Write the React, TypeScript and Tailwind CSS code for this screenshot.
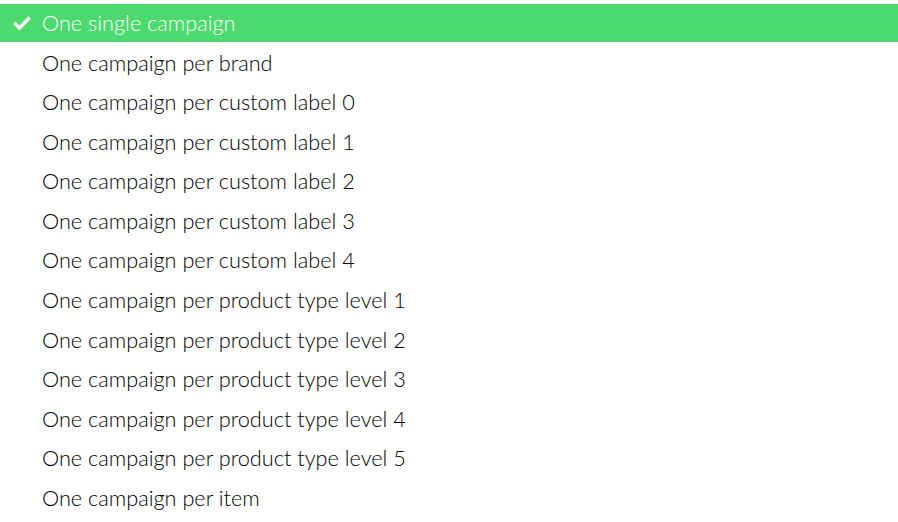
const options = [
  "One single campaign",
  "One campaign per brand",
  "One campaign per custom label 0",
  "One campaign per custom label 1",
  "One campaign per custom label 2",
  "One campaign per custom label 3",
  "One campaign per custom label 4",
  "One campaign per product type level 1",
  "One campaign per product type level 2",
  "One campaign per product type level 3",
  "One campaign per product type level 4",
  "One campaign per product type level 5",
  "One campaign per item",
];

function Check() {
  return (
    <svg viewBox="0 0 20 16" className="w-[20px] h-[15px]" fill="currentColor">
      <path d="M7.2 15.4 0.4 8.6 3.1 5.9 7.2 10 16.9 0.3 19.6 3z" />
    </svg>
  );
}

export default function App() {
  const selected = 0;
  return (
    <div className="w-[898px] h-[522px] bg-white pt-1 font-['Lato',sans-serif] font-light text-[21.7px] text-black">
      <ul>
        {options.map((label, i) => (
          <li
            key={label}
            className={
              i === selected
                ? "flex items-center h-[38px] mb-[1px] bg-[#4cd96e] text-white"
                : "flex items-center h-[39.6px] text-black"
            }
          >
            <span className="w-[42px] flex justify-center pl-[1px]">
              {i === selected && <Check />}
            </span>
            <span>{label}</span>
          </li>
        ))}
      </ul>
    </div>
  );
}
